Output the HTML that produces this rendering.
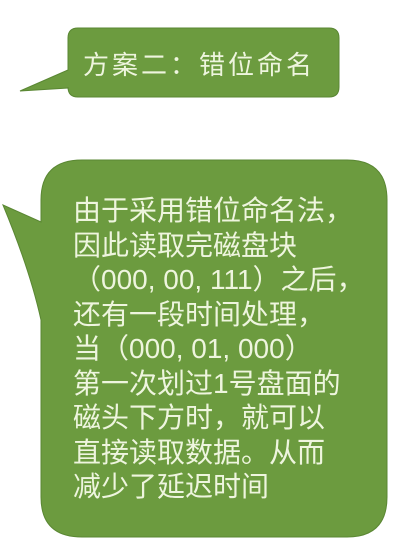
<!DOCTYPE html>
<html><head><meta charset="utf-8"><style>
html,body{margin:0;padding:0;background:#fff;width:415px;height:541px;overflow:hidden}
.t{position:absolute;color:#eef5de;font-family:"Liberation Sans","Noto Sans CJK SC",sans-serif;white-space:nowrap}
</style></head><body>
<svg width="415" height="541" style="position:absolute;left:0;top:0">
<path d="M78,28 H329 Q339,28 339,38 V87 Q339,97 329,97 H78 Q68,97 68,87 V88 L20,91 L68,70 V38 Q68,28 78,28 Z" fill="#6c9b3f" stroke="#5a8733" stroke-width="1"/>
<path d="M82,160 H347 Q387,160 387,200 V497 Q387,537 347,537 H82 Q41,537 41,497 V320 Q30,270 3,205 L41,222 V200 Q41,160 82,160 Z" fill="#6c9b3f" stroke="#5a8733" stroke-width="1"/>
</svg>
<div class="t" style="left:83px;top:45px;font-size:26px;letter-spacing:3px;line-height:40px">方案二：错位命名</div>
<div class="t" style="left:73px;top:194px;font-size:28px;line-height:34.5px">由于采用错位命名法，<br>因此读取完磁盘块<br>（000, 00, 111）之后，<br>还有一段时间处理，<br>当（000, 01, 000）<br>第一次划过1号盘面的<br>磁头下方时，就可以<br>直接读取数据。从而<br>减少了延迟时间</div>
</body></html>
